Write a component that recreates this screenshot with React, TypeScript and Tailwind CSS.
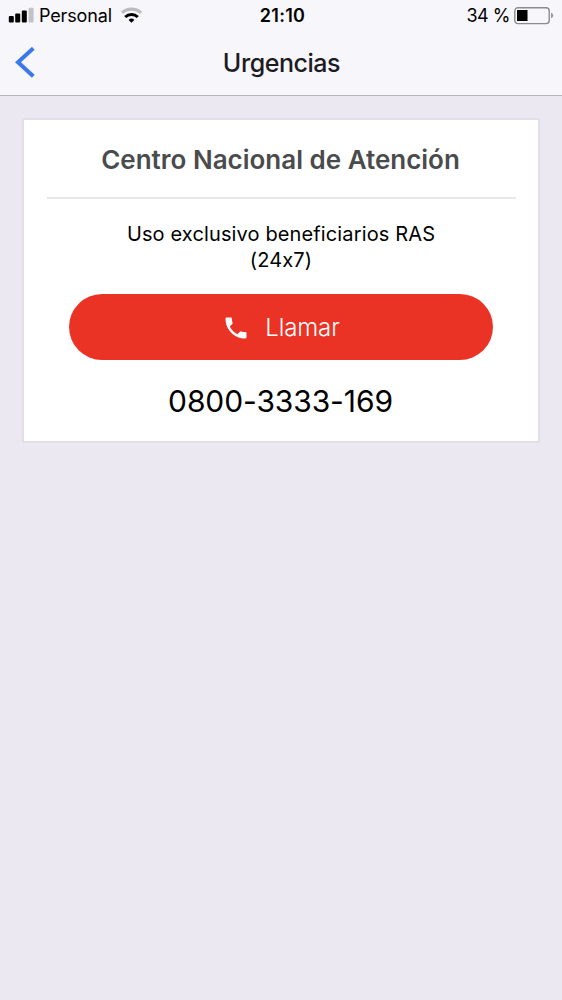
import { MdPhone } from 'react-icons/md'

function StatusBar() {
  return (
    <div className="grid h-8 grid-cols-3 items-center text-[18px] leading-8">
      <div className="flex items-center pl-2">
        <svg className="-mt-0.5" width="26" height="16" viewBox="0 0 26 16">
          <rect x="0.8" y="9" width="5" height="6.5" rx="1" fill="#000" />
          <rect x="7.2" y="6.5" width="5" height="9" rx="1" fill="#000" />
          <rect x="13.8" y="3.5" width="5" height="12" rx="1" fill="#000" />
          <rect x="20.6" y="0.8" width="5" height="14.7" rx="1" fill="#c3c2c6" />
        </svg>
        <span className="ml-[5px] tracking-[-0.15px]">Personal</span>
        <svg className="-mt-0.5 ml-[9px]" width="21" height="16" viewBox="0 0 21 16">
          <path d="M1 5.8a14 14 0 0 1 19 0" fill="none" stroke="#bcbbbf" strokeWidth="3.2" />
          <path d="M4.2 10a9.2 9.2 0 0 1 12.6 0" fill="none" stroke="#000" strokeWidth="3" />
          <path d="M10.5 15.8 7.6 13a4.2 4.2 0 0 1 5.8 0Z" fill="#000" />
        </svg>
      </div>
      <div className="pl-[3px] text-center font-semibold tracking-[0.3px]">21:10</div>
      <div className="flex items-center justify-end pr-2">
        <span className="tracking-[-0.5px]">34 %</span>
        <svg className="ml-1" width="40" height="18" viewBox="0 0 40 18">
          <rect x="0.8" y="0.8" width="34.4" height="15.8" rx="3" fill="none" stroke="#8b8a8e" strokeWidth="1.4" />
          <rect x="3" y="3" width="10.5" height="11" fill="#000" />
          <path d="M37 5.8c3 1 3 4.4 0 5.4Z" fill="#98979b" />
        </svg>
      </div>
    </div>
  )
}

export default function App() {
  return (
    <div className="min-h-[1000px] bg-[#ebe8f2] font-['Inter',sans-serif] text-black [font-feature-settings:'calt'_0]">
      <header className="h-24 border-b border-[#b7b6bb] bg-[#f7f6fa]">
        <StatusBar />
        <div className="grid h-[62px] grid-cols-3 items-center">
          <button className="pl-[15px]" aria-label="Volver">
            <svg width="20" height="32" viewBox="0 0 20 32">
              <path d="M18.3 1.3 3 15.2l15.3 14" fill="none" stroke="#3b78ee" strokeWidth="4" />
            </svg>
          </button>
          <h1 className="pt-0.5 pl-px text-center text-[25px] font-medium tracking-[-0.45px] text-[#1c1b1f]">
            Urgencias
          </h1>
        </div>
      </header>
      <main className="px-[22px] pt-[22px]">
        <section className="h-[325px] border-2 border-[#e2dfe6] bg-white pr-[22px] pl-[23px] text-center">
          <h2 className="h-[79px] border-b-2 border-[#e7e6e8] pt-[21px] pr-[2px] text-[26px] leading-[38px] font-semibold text-[#4a4b4d]">
            Centro Nacional de Atención
          </h2>
          <p className="pt-[22px] pr-px text-[20px] leading-[26px] tracking-[0.13px]">
            Uso exclusivo beneficiarios RAS
            <br />
            (24x7)
          </p>
          <div className="mt-[21px] pr-[23px] pl-[22px]">
            <button className="flex h-[66px] w-full items-center justify-center rounded-full bg-[#ea3325] text-[24px] font-light text-white">
              <MdPhone className="mt-px mr-[15px] size-7" />
              <span className="pt-0.5 tracking-[-0.1px]">Llamar</span>
            </button>
          </div>
          <p className="mt-[23px] pr-[2px] text-[30px] leading-9 tracking-[-0.1px]">0800-3333-169</p>
        </section>
      </main>
    </div>
  )
}
